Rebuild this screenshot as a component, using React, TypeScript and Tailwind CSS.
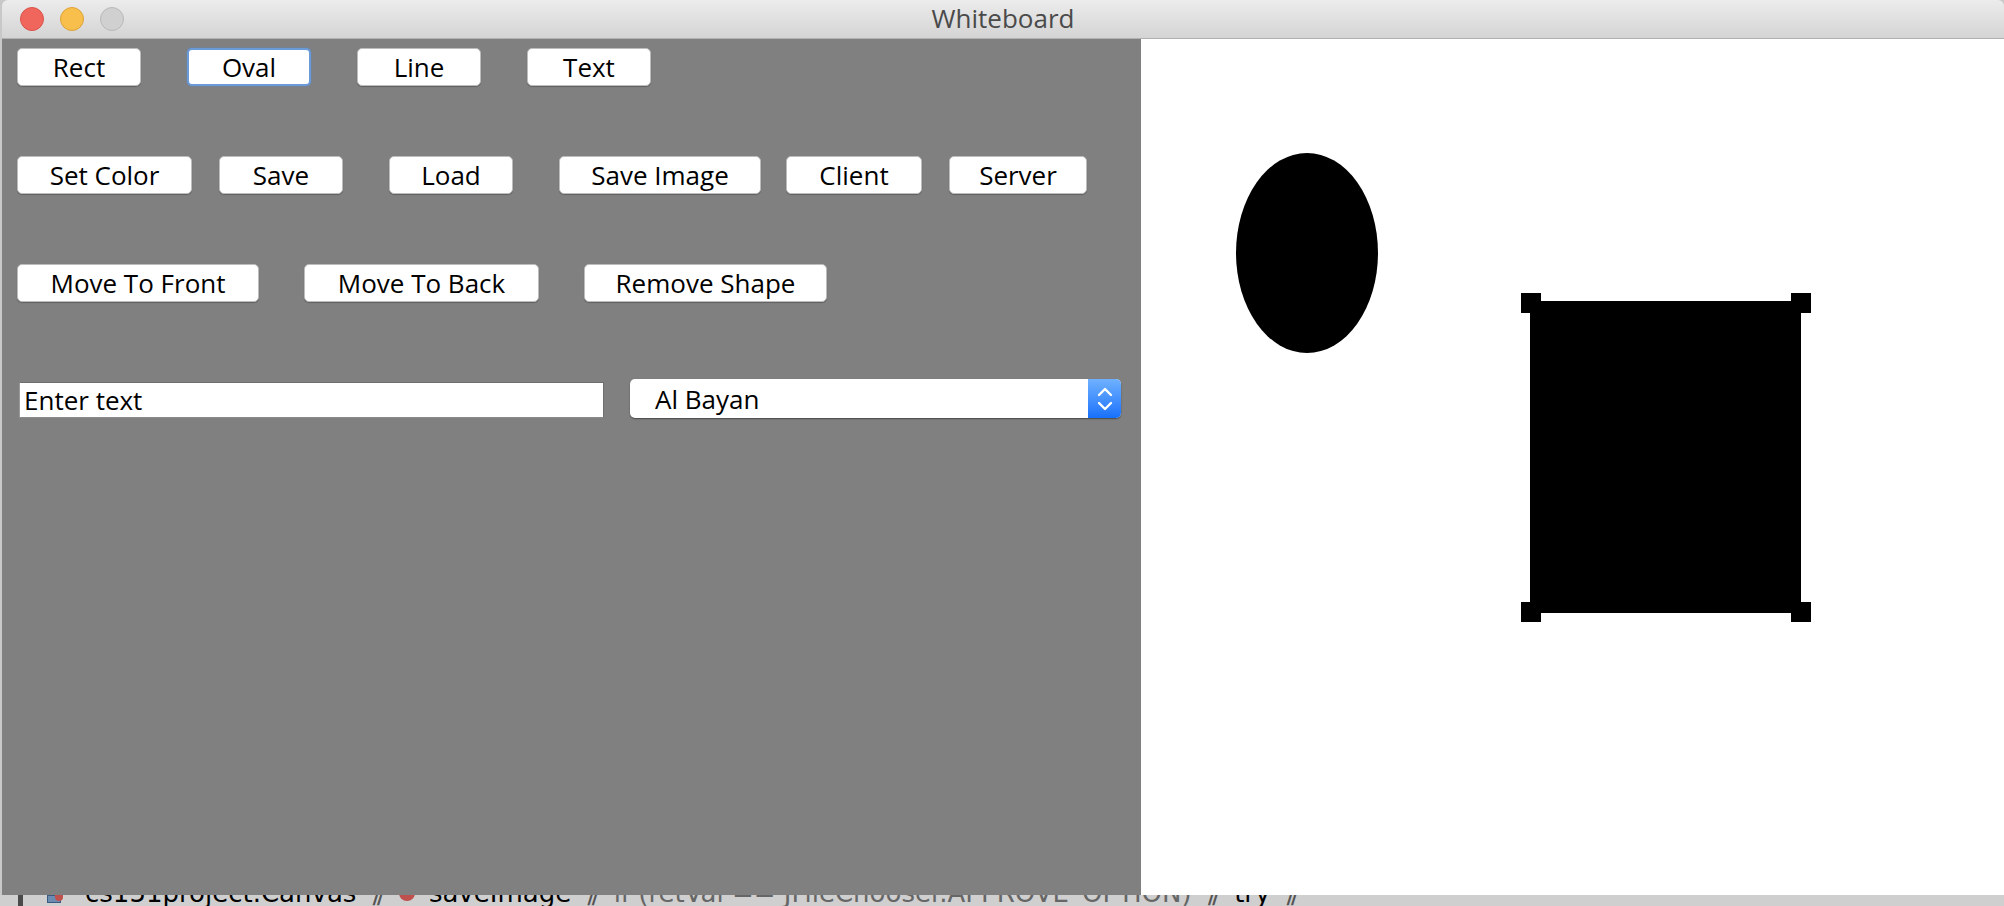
import React from "react";

function Btn({ label, w, ml, focus }: { label: string; w: string; ml: string; focus?: boolean }) {
  return (
    <div
      className={`${w} ${ml} h-[38px] shrink-0 flex items-center justify-center bg-white rounded-[5px] text-[26px] text-black leading-none ${
        focus
          ? "border-2 border-[#6a9ad8] shadow-[0_0_2px_rgba(80,140,220,0.7)]"
          : "border border-[#bdbdbd] shadow-[0_1px_1px_rgba(0,0,0,0.25)]"
      }`}
    >
      {label}
    </div>
  );
}

export default function App() {
  return (
    <div className="w-[2004px] h-[906px] overflow-hidden bg-[#c8c8c8] flex flex-col font-['Open_Sans',sans-serif]">
      <div className="flex flex-col h-[895px] ml-[2px] rounded-t-[6px] overflow-hidden">
        {/* Title bar */}
        <div className="h-[39px] shrink-0 grid grid-cols-[1fr_auto_1fr] items-center bg-gradient-to-b from-[#ececec] to-[#d4d4d4] border-b border-[#b0b0b0]">
          <div className="flex items-center gap-[16px] pl-[18px]">
            <div className="w-[24px] h-[24px] rounded-full bg-[#f0665c] border border-[#d9534a]" />
            <div className="w-[24px] h-[24px] rounded-full bg-[#f8bf4d] border border-[#dea236]" />
            <div className="w-[24px] h-[24px] rounded-full bg-[#d0d0d0] border border-[#b9b9b9]" />
          </div>
          <div className="text-[26px] leading-none text-[#4a4a4a] -mt-[2px]">Whiteboard</div>
          <div />
        </div>

        {/* Body */}
        <div className="flex flex-1">
          <div className="w-[1139px] shrink-0 bg-[#808080] flex flex-col pl-[15px] pt-[9px]">
            <div className="flex">
              <Btn label="Rect" w="w-[124px]" ml="ml-0" />
              <Btn label="Oval" w="w-[124px]" ml="ml-[46px]" focus />
              <Btn label="Line" w="w-[124px]" ml="ml-[46px]" />
              <Btn label="Text" w="w-[124px]" ml="ml-[46px]" />
            </div>
            <div className="flex mt-[70px]">
              <Btn label="Set Color" w="w-[175px]" ml="ml-0" />
              <Btn label="Save" w="w-[124px]" ml="ml-[27px]" />
              <Btn label="Load" w="w-[124px]" ml="ml-[46px]" />
              <Btn label="Save Image" w="w-[202px]" ml="ml-[46px]" />
              <Btn label="Client" w="w-[136px]" ml="ml-[25px]" />
              <Btn label="Server" w="w-[138px]" ml="ml-[27px]" />
            </div>
            <div className="flex mt-[70px]">
              <Btn label="Move To Front" w="w-[242px]" ml="ml-0" />
              <Btn label="Move To Back" w="w-[235px]" ml="ml-[45px]" />
              <Btn label="Remove Shape" w="w-[243px]" ml="ml-[45px]" />
            </div>
            <div className="flex items-start mt-[77px]">
              <div className="ml-[2px] mt-[3px] w-[585px] h-[36px] bg-white border border-[#6e6e6e] border-b-[#8a8a8a] border-l-[#9a9a9a] flex items-center pl-[4px] text-[26px] leading-none text-black">
                Enter text
              </div>
              <div className="ml-[26px] w-[491px] h-[39px] flex bg-white rounded-[5px] shadow-[0_1px_1.5px_rgba(0,0,0,0.45)]">
                <div className="flex-1 flex items-center pl-[25px] text-[26px] leading-none text-black">Al Bayan</div>
                <div className="w-[33px] rounded-r-[5px] bg-gradient-to-b from-[#6fb1ff] to-[#1670fb] flex items-center justify-center">
                  <svg width="16" height="24" viewBox="0 0 16 24" fill="none" stroke="white" strokeWidth="2.4" strokeLinecap="round" strokeLinejoin="round">
                    <path d="M2 8 L8 2 L14 8" />
                    <path d="M2 16 L8 22 L14 16" />
                  </svg>
                </div>
              </div>
            </div>
          </div>

          {/* Canvas */}
          <div className="flex-1 bg-white">
            <svg width="862" height="856" viewBox="0 0 862 856">
              <ellipse cx="166" cy="214" rx="71" ry="100" fill="black" />
              <rect x="389" y="262" width="271" height="312" fill="black" />
              <rect x="380" y="254" width="20" height="20" fill="black" />
              <rect x="650" y="254" width="20" height="20" fill="black" />
              <rect x="380" y="563" width="20" height="20" fill="black" />
              <rect x="650" y="563" width="20" height="20" fill="black" />
            </svg>
          </div>
        </div>
      </div>

      {/* Background IDE strip peeking under the window */}
      <div className="h-[11px] overflow-hidden flex items-start bg-[#cfcfcf]">
        <div className="ml-[18px] w-[5px] h-[11px] bg-[#4a4a4a]" />
        <div className="ml-[24px] w-[14px] h-[8px] bg-[#6b8cb0] border border-[#3a5a80]" />
        <div className="-ml-[6px] mt-[0px] w-[8px] h-[6px] rounded-b-full bg-[#c0504d]" />
        <div className="ml-[22px] -mt-[15px] text-[26px] leading-[26px] text-black whitespace-nowrap font-['DejaVu_Sans',sans-serif] flex items-center gap-[14px]">
          <span>cs151project.Canvas</span>
          <span className="text-[#555]">⟫</span>
          <span className="inline-block w-[16px] h-[16px] rounded-full bg-[#c0504d]" />
          <span>saveImage</span>
          <span className="text-[#555]">⟫</span>
          <span className="text-[#666]">if (retVal == JFileChooser.APPROVE_OPTION)</span>
          <span className="text-[#555]">⟫</span>
          <span>try</span>
          <span className="text-[#555]">⟫</span>
        </div>
      </div>
    </div>
  );
}
